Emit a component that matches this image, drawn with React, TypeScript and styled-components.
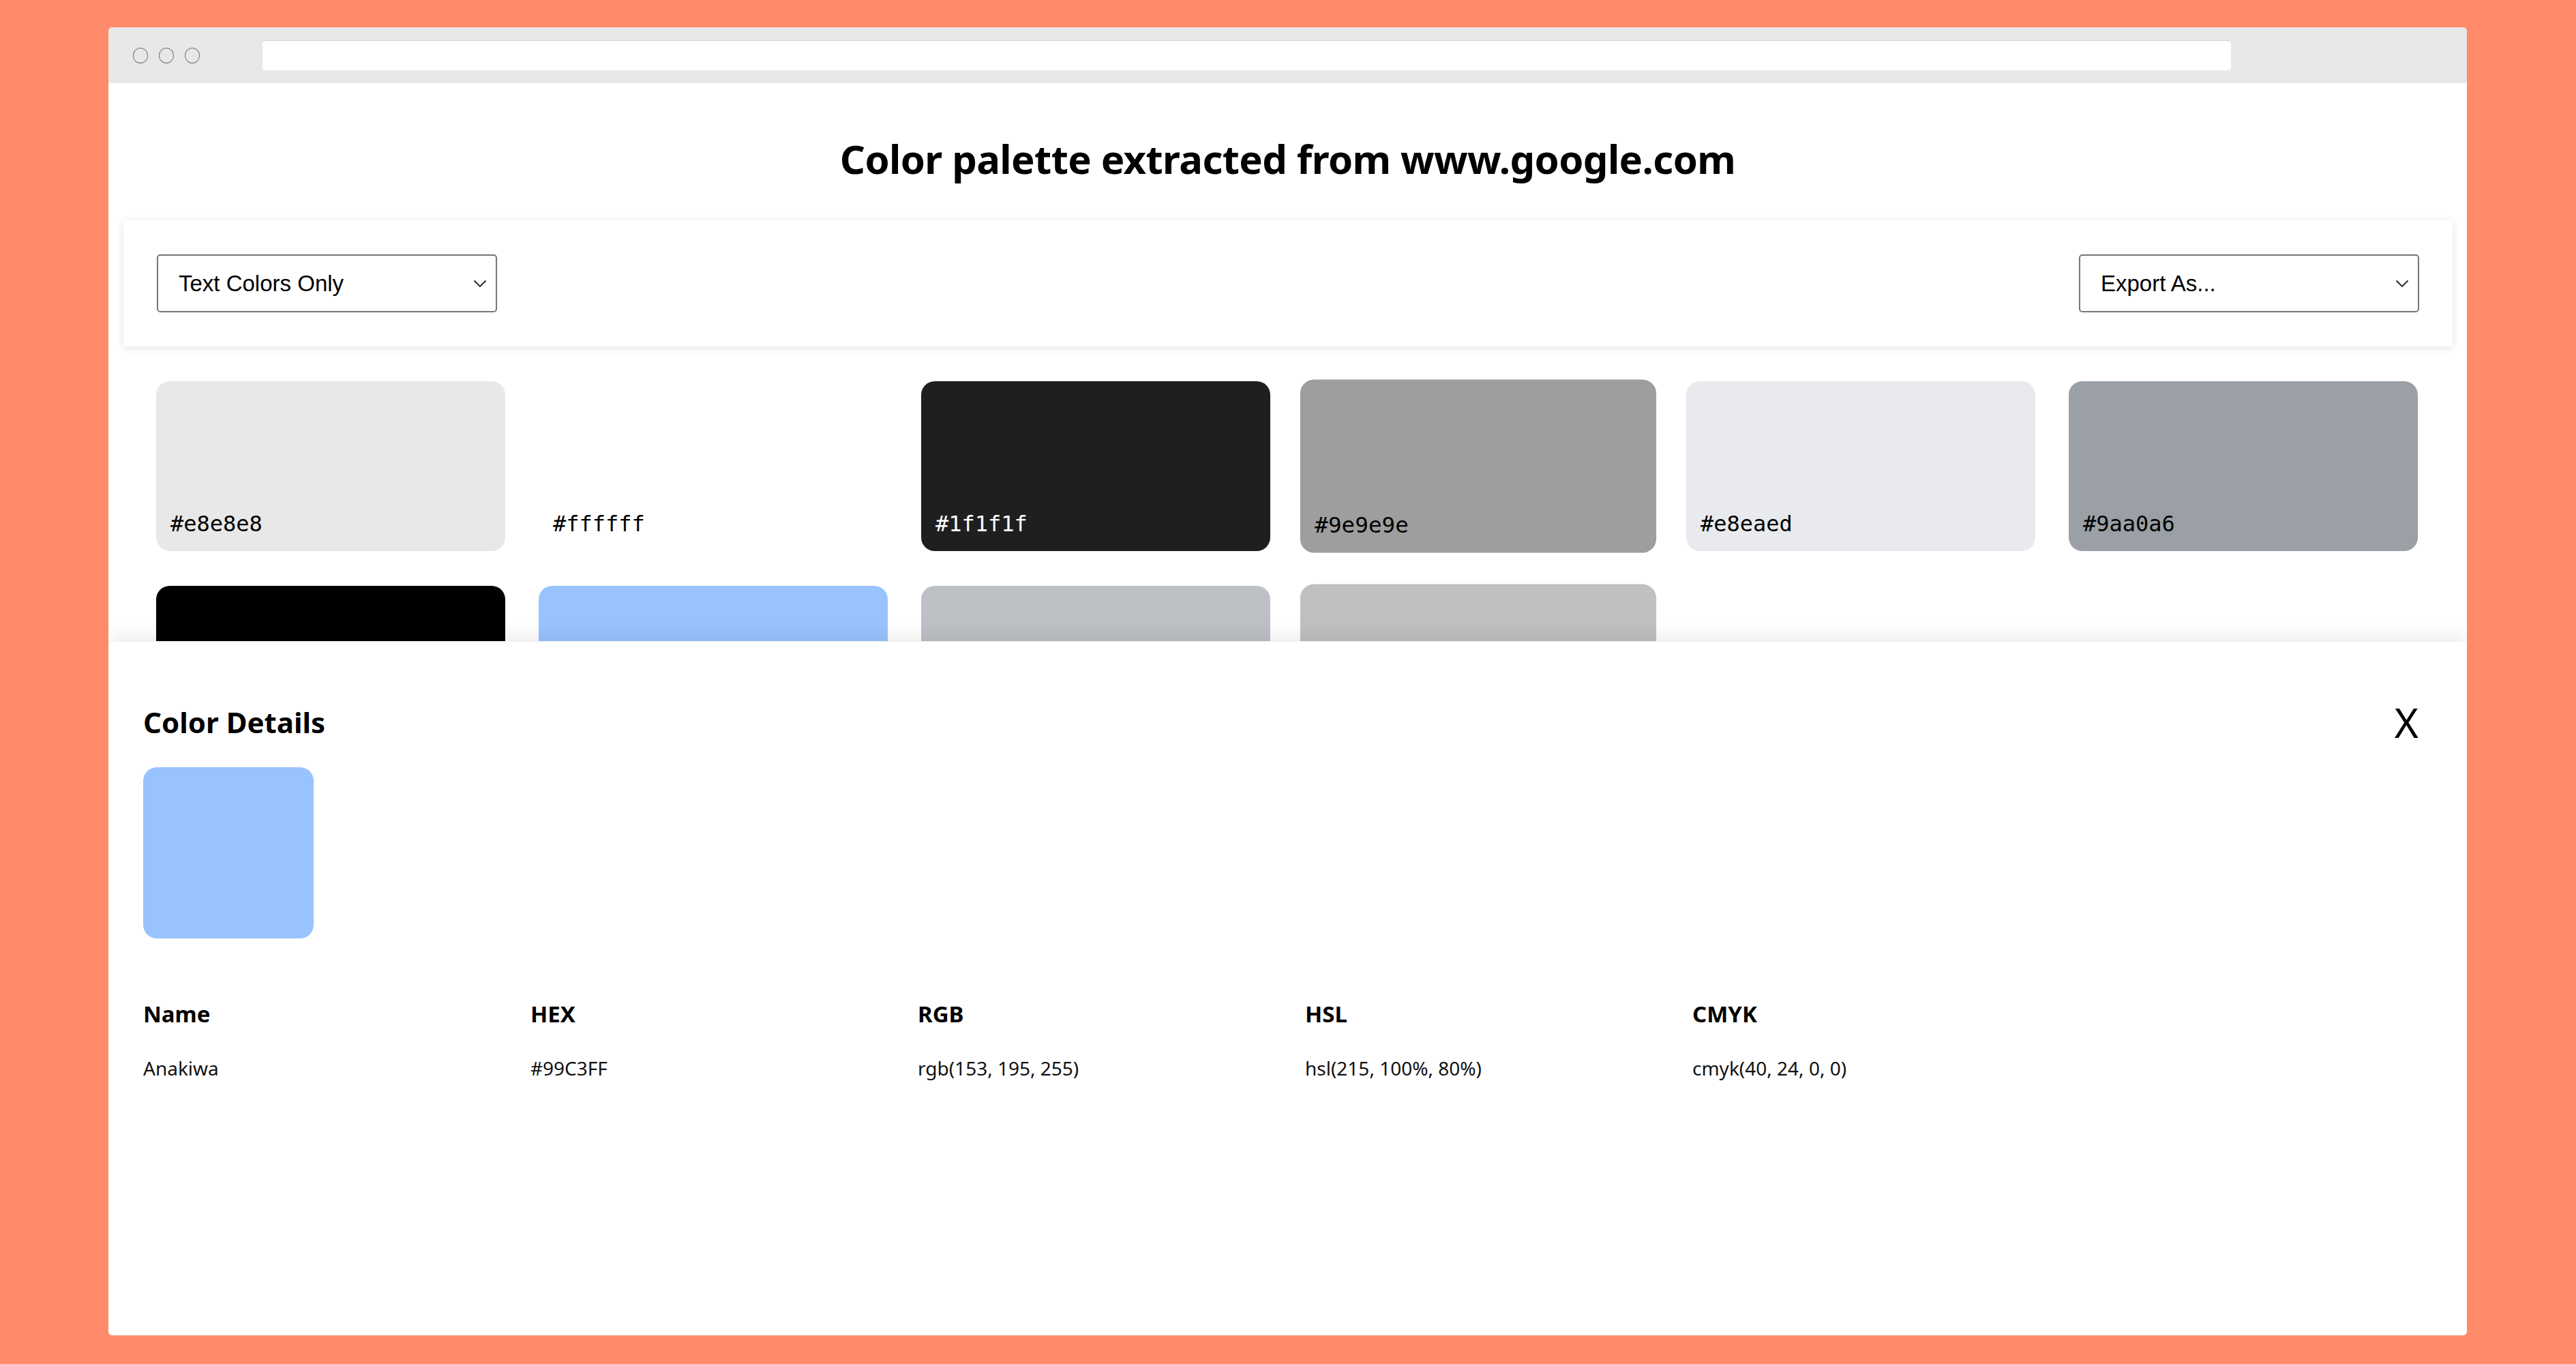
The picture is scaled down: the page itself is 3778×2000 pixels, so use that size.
import React from 'react'
import styled, { createGlobalStyle } from 'styled-components'

const GlobalStyle = createGlobalStyle`
  html, body {
    margin: 0;
    padding: 0;
    background: #ff8b6a;
  }
  * {
    box-sizing: border-box;
  }
`

const Page = styled.div`
  width: 3778px;
  height: 2000px;
  padding: 40px 160px 42px 159px;
  background: #ff8b6a;
`

const Window = styled.div`
  position: relative;
  height: 100%;
  background: #fff;
  border-radius: 6px;
  overflow: hidden;
  display: flex;
  flex-direction: column;
`

const TitleBar = styled.div`
  height: 82px;
  flex-shrink: 0;
  background: #e8e8e8;
  display: flex;
  align-items: center;
  padding-left: 36px;
`

const Dots = styled.div`
  display: flex;
  gap: 16px;
`

const Dot = styled.span`
  width: 22px;
  height: 23px;
  border: 1.5px solid #7a7a7a;
  border-radius: 50%;
`

const UrlBar = styled.div`
  margin-left: 92px;
  width: 2887px;
  height: 44px;
  background: #fff;
  border-radius: 4px;
  border-top: 1px solid #cfcfcf;
`

// everything behind the details drawer; clipped where the drawer starts
const Content = styled.div`
  height: 818px;
  flex-shrink: 0;
  overflow: hidden;
`

const Heading = styled.h1`
  margin: 0;
  padding: 74px 0 53px;
  text-align: center;
  font-family: 'Noto Sans', 'Open Sans', sans-serif;
  font-weight: 700;
  font-size: 58px;
  letter-spacing: -0.6px;
  line-height: 74px;
  color: #000;
`

const Toolbar = styled.div`
  margin: 0 21px 0 22px;
  height: 185px;
  padding: 0 49px;
  display: flex;
  align-items: center;
  justify-content: space-between;
  background: #fff;
  box-shadow: 0 2px 10px rgba(0, 0, 0, 0.12);
`

const SelectWrap = styled.div`
  position: relative;
  width: 499px;
  height: 85px;
`

const Select = styled.select`
  appearance: none;
  width: 100%;
  height: 100%;
  padding: 0 60px 0 30px;
  border: 2px solid #767676;
  border-radius: 5px;
  background: #fff;
  color: #000;
  font-family: 'Liberation Sans', Arial, sans-serif;
  font-size: 33px;
`

const Chevron = styled.svg`
  position: absolute;
  right: 15px;
  top: 37px;
  pointer-events: none;
`

const Grid = styled.div`
  margin-top: 51px;
  padding: 0 72px 0 70px;
  display: grid;
  grid-template-columns: repeat(6, 1fr);
  gap: 51px 49px;
`

const Swatch = styled.div<{ $bg: string; $dark: boolean; $lifted: boolean }>`
  height: 249px;
  border-radius: 20px;
  background: ${(p) => p.$bg};
  color: ${(p) => (p.$dark ? '#fff' : '#000')};
  display: flex;
  align-items: flex-end;
  padding: 0 21px 21px;
  font-family: 'DejaVu Sans Mono', 'Liberation Mono', monospace;
  font-size: 32px;
  transform: ${(p) => (p.$lifted ? 'scale(1.02)' : 'none')};
`

const Drawer = styled.div`
  position: absolute;
  left: 0;
  right: 0;
  bottom: 0;
  height: 1017px;
  background: #fff;
  box-shadow: 0 -6px 28px rgba(0, 0, 0, 0.09);
  padding: 82px 51px 0;
  font-family: 'Noto Sans', 'Open Sans', sans-serif;
  color: #000;
`

const DrawerHead = styled.div`
  display: flex;
  align-items: center;
  justify-content: space-between;
`

const DrawerTitle = styled.h2`
  margin: 0;
  font-size: 42px;
  font-weight: 700;
  line-height: 1.2;
`

const Close = styled.button`
  margin-right: 20px;
  padding: 0;
  border: none;
  background: none;
  font-family: 'Noto Sans', 'Open Sans', sans-serif;
  font-size: 60px;
  line-height: 72px;
  font-weight: 400;
  color: #000;
`

const BigSwatch = styled.div<{ $bg: string }>`
  margin-top: 30px;
  width: 250px;
  height: 251px;
  border-radius: 20px;
  background: ${(p) => p.$bg};
`

const Table = styled.div`
  margin-top: 91px;
  display: grid;
  grid-template-columns: repeat(5, 568px);
  row-gap: 43px;
`

const Th = styled.div`
  font-size: 33px;
  font-weight: 700;
  line-height: 1.2;
`

const Td = styled.div`
  font-size: 28px;
  font-weight: 400;
  line-height: 1.2;
  color: #111;
`

// second row sits under the open drawer, so its labels never show
const colors = [
  { hex: '#e8e8e8' },
  { hex: '#ffffff' },
  { hex: '#1f1f1f', dark: true },
  { hex: '#9e9e9e', lifted: true },
  { hex: '#e8eaed' },
  { hex: '#9aa0a6' },
  { hex: '#000000', dark: true, covered: true },
  { hex: '#99c3ff', covered: true },
  { hex: '#bdc1c6', covered: true },
  { hex: '#c0c0c0', lifted: true, covered: true },
]

const details = [
  ['Name', 'Anakiwa'],
  ['HEX', '#99C3FF'],
  ['RGB', 'rgb(153, 195, 255)'],
  ['HSL', 'hsl(215, 100%, 80%)'],
  ['CMYK', 'cmyk(40, 24, 0, 0)'],
]

const ChevronIcon = () => (
  <Chevron width="20" height="12" viewBox="0 0 20 12">
    <path d="M1.5 1.5 L10 10 L18.5 1.5" fill="none" stroke="#222" strokeWidth="1.8" />
  </Chevron>
)

export default function App() {
  return (
    <Page>
      <GlobalStyle />
      <Window>
        <TitleBar>
          <Dots>
            <Dot />
            <Dot />
            <Dot />
          </Dots>
          <UrlBar />
        </TitleBar>
        <Content>
          <Heading>Color palette extracted from www.google.com</Heading>
          <Toolbar>
            <SelectWrap>
              <Select defaultValue="text">
                <option value="text">Text Colors Only</option>
                <option value="all">All Colors</option>
              </Select>
              <ChevronIcon />
            </SelectWrap>
            <SelectWrap>
              <Select defaultValue="">
                <option value="">Export As...</option>
                <option value="css">CSS</option>
              </Select>
              <ChevronIcon />
            </SelectWrap>
          </Toolbar>
          <Grid>
            {colors.map((c) => (
              <Swatch key={c.hex} $bg={c.hex} $dark={!!c.dark} $lifted={!!c.lifted}>
                {c.covered ? null : c.hex}
              </Swatch>
            ))}
          </Grid>
        </Content>
        <Drawer>
          <DrawerHead>
            <DrawerTitle>Color Details</DrawerTitle>
            <Close>X</Close>
          </DrawerHead>
          <BigSwatch $bg="#99c3ff" />
          <Table>
            {details.map(([h]) => (
              <Th key={h}>{h}</Th>
            ))}
            {details.map(([h, v]) => (
              <Td key={h}>{v}</Td>
            ))}
          </Table>
        </Drawer>
      </Window>
    </Page>
  )
}
